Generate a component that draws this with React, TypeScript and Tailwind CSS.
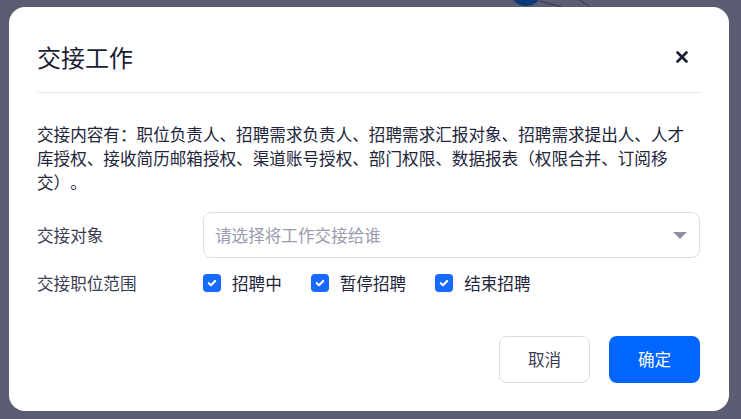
import React from "react";

const font = { fontFamily: '"Noto Sans CJK SC", "Noto Sans", sans-serif' };

function Check({ label }: { label: string }) {
  return (
    <div className="flex items-center">
      <span className="flex h-[18px] w-[18px] items-center justify-center rounded-[4px] bg-[#1769ff]">
        <svg width="10" height="8" viewBox="0 0 10 8" fill="none">
          <path d="M1.8 4.2 L4 6.2 L8.2 2" stroke="white" strokeWidth="2.2" strokeLinecap="round" strokeLinejoin="round" />
        </svg>
      </span>
      <span className="ml-[11px] text-[16.6px] leading-6 text-[#22243a]">{label}</span>
    </div>
  );
}

export default function App() {
  return (
    <div style={font} className="relative h-[419px] w-[741px] overflow-hidden bg-[#5b5d72] pl-[9px] pt-[7px]">
      <div className="absolute left-[509px] top-[-28px] h-[34px] w-[34px] rounded-full bg-[#0d3a78]" />
      <svg className="absolute left-[540px] top-0" width="60" height="8" viewBox="0 0 60 8">
        <path d="M0 1 L22 7 M40 0 L50 7" stroke="#33354a" strokeWidth="1" fill="none" />
      </svg>
      <div className="relative flex h-[404px] w-[720px] flex-col rounded-[16px] bg-white pl-[28px] pr-[29px]">
        <div className="flex items-center justify-between pt-[32px] pb-[17px]">
          <h1 className="text-[24px] leading-9 font-normal text-[#1b1d33]">交接工作</h1>
          <svg className="mr-[12px]" width="12" height="12" viewBox="0 0 12 12">
            <path d="M1.5 1.5 L10.5 10.5 M10.5 1.5 L1.5 10.5" stroke="#1b1d33" strokeWidth="2.6" strokeLinecap="round" />
          </svg>
        </div>
        <div className="h-px bg-[#e6e6f0]" />
        <p className="mt-[29px] text-[16.6px] leading-6 text-[#22243a] [text-spacing-trim:space-all]">
          交接内容有：职位负责人、招聘需求负责人、招聘需求汇报对象、招聘需求提出人、人才库授权、接收简历邮箱授权、渠道账号授权、部门权限、数据报表（权限合并、订阅移交）。
        </p>
        <div className="mt-[18px] flex items-center">
          <div className="w-[166px] text-[16.6px] leading-6 text-[#3a3c52]">交接对象</div>
          <div className="flex h-[46px] flex-1 items-center justify-between rounded-[8px] border border-[#dcdce8] pl-[11px] pr-[12px]">
            <span className="text-[16.6px] leading-6 text-[#9a9cae]">请选择将工作交接给谁</span>
            <svg width="14" height="7" viewBox="0 0 14 7">
              <path d="M0 0 L14 0 L7 7 Z" fill="#8f90a3" />
            </svg>
          </div>
        </div>
        <div className="mt-[13px] flex items-center">
          <div className="w-[166px] text-[16.6px] leading-6 text-[#3a3c52]">交接职位范围</div>
          <div className="flex items-center gap-[29px]">
            <Check label="招聘中" />
            <Check label="暂停招聘" />
            <Check label="结束招聘" />
          </div>
        </div>
        <div className="mt-auto flex justify-end gap-[19px] pb-[28px]">
          <button className="h-[47px] w-[91px] rounded-[8px] border border-[#dcdce8] bg-white text-[16.6px] text-[#3a3c52]">取消</button>
          <button className="h-[47px] w-[91px] rounded-[8px] bg-[#0066ff] text-[16.6px] text-white">确定</button>
        </div>
      </div>
    </div>
  );
}
